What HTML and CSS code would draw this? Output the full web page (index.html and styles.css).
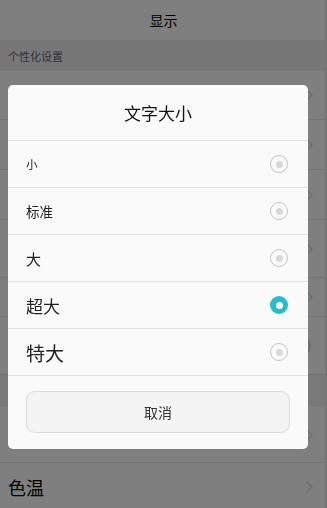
FILE: index.html
```html
<!DOCTYPE html>
<html lang="zh-CN">
<head>
    <meta charset="UTF-8">
    <meta name="viewport" content="width=device-width, initial-scale=1.0">
    <title>显示</title>
    <link rel="stylesheet" href="styles.css">
</head>
<body>
    <div class="page">
        <div class="topbar">显示</div>
        <div class="section">个性化设置</div>
        <!-- rows hidden behind the dialog -->
        <div class="row h49"><span></span><i class="chev"></i></div>
        <div class="row h50"><span></span><i class="chev"></i></div>
        <div class="row h50"><span></span><i class="chev"></i></div>
        <div class="row h58"><span></span><i class="chev"></i></div>
        <div class="row h39"><span></span><i class="chev"></i></div>
        <div class="row h58"><span></span><i class="knob"></i></div>
        <div class="section dark"></div>
        <div class="row h56"><span></span><i class="chev"></i></div>
        <div class="row h45 big"><span>色温</span><i class="chev"></i></div>
        <div class="scrollbar"></div>
    </div>

    <div class="mask"></div>

    <div class="dialog">
        <div class="dialog-title">文字大小</div>
        <ul class="options">
            <li class="option s1"><span>小</span><i class="radio"></i></li>
            <li class="option s2"><span>标准</span><i class="radio"></i></li>
            <li class="option s3"><span>大</span><i class="radio"></i></li>
            <li class="option s4"><span>超大</span><i class="radio checked"></i></li>
            <li class="option s5"><span>特大</span><i class="radio"></i></li>
        </ul>
        <div class="dialog-footer">
            <button class="cancel">取消</button>
        </div>
    </div>
</body>
</html>
```

FILE: styles.css
```css
body {
    margin: 0;
    font-family: "Noto Sans CJK SC", "Noto Sans", sans-serif;
    color: #000;
    background-color: #fff;
    overflow: hidden;
}
.page {
    position: relative;
    width: 327px;
    height: 508px;
    display: flex;
    flex-direction: column;
    overflow: hidden;
}
.topbar {
    height: 41px;
    flex-shrink: 0;
    display: flex;
    align-items: center;
    justify-content: center;
    font-size: 14px;
    border-bottom: 1px solid #ececec;
    box-sizing: border-box;
}
.section {
    height: 30px;
    flex-shrink: 0;
    display: flex;
    align-items: center;
    padding-left: 8px;
    font-size: 11px;
    color: #666;
    background-color: #efefef;
}
.section.dark {
    height: 32px;
    background-color: #f2f2f2;
}
.row {
    flex-shrink: 0;
    display: flex;
    align-items: center;
    justify-content: space-between;
    padding: 0 16px 0 8px;
    font-size: 15px;
    border-bottom: 1px solid #e6e6e6;
    box-sizing: border-box;
}
.row.big {
    font-size: 18px;
    border-bottom: none;
    padding-top: 3px;
}
.h39 { height: 39px; }
.h45 { height: 45px; }
.h49 { height: 49px; }
.h50 { height: 50px; }
.h56 { height: 56px; }
.h58 { height: 58px; }
.chev {
    width: 7px;
    height: 7px;
    border-top: 1px solid #d2d2d2;
    border-right: 1px solid #d2d2d2;
    transform: rotate(45deg);
}
.knob {
    width: 22px;
    height: 22px;
    border-radius: 50%;
    background-color: #dcdcdc;
}
.scrollbar {
    position: absolute;
    top: 0;
    right: 0;
    width: 2px;
    height: 100%;
    background-color: #e8e8e8;
}
.mask {
    position: fixed;
    inset: 0;
    background-color: rgba(0, 0, 0, 0.5);
}
.dialog {
    position: fixed;
    left: 8px;
    top: 85px;
    width: 300px;
    background-color: #fafafa;
    border-radius: 5px;
    overflow: hidden;
}
.dialog-title {
    height: 55px;
    display: flex;
    align-items: center;
    justify-content: center;
    font-size: 17px;
    color: #111;
    border-bottom: 1px solid #e3e3e3;
}
.options {
    list-style: none;
    margin: 0;
    padding: 0;
}
.option {
    height: 46px;
    display: flex;
    align-items: center;
    justify-content: space-between;
    padding: 0 20px 0 18px;
    border-bottom: 1px solid #e3e3e3;
    color: #222;
}
.s1 { font-size: 11.5px; }
.s2 { font-size: 13.5px; }
.s3 { font-size: 15px; }
.s4 { font-size: 17px; }
.s5 { font-size: 19px; }
.radio {
    width: 18px;
    height: 18px;
    box-sizing: border-box;
    border: 1px solid #c4c4c4;
    border-radius: 50%;
    display: flex;
    align-items: center;
    justify-content: center;
}
.radio::after {
    content: "";
    width: 7px;
    height: 7px;
    border-radius: 50%;
    background-color: #d8d8d8;
}
.radio.checked {
    border: none;
    background-color: #23bec9;
}
.radio.checked::after {
    background-color: #fff;
}
.dialog-footer {
    padding: 15px 18px 16px 18px;
}
.cancel {
    display: block;
    width: 100%;
    height: 42px;
    border: 1px solid #dcdcdc;
    border-radius: 9px;
    background-color: #f4f4f4;
    font-family: inherit;
    font-size: 14px;
    color: #333;
}
```
